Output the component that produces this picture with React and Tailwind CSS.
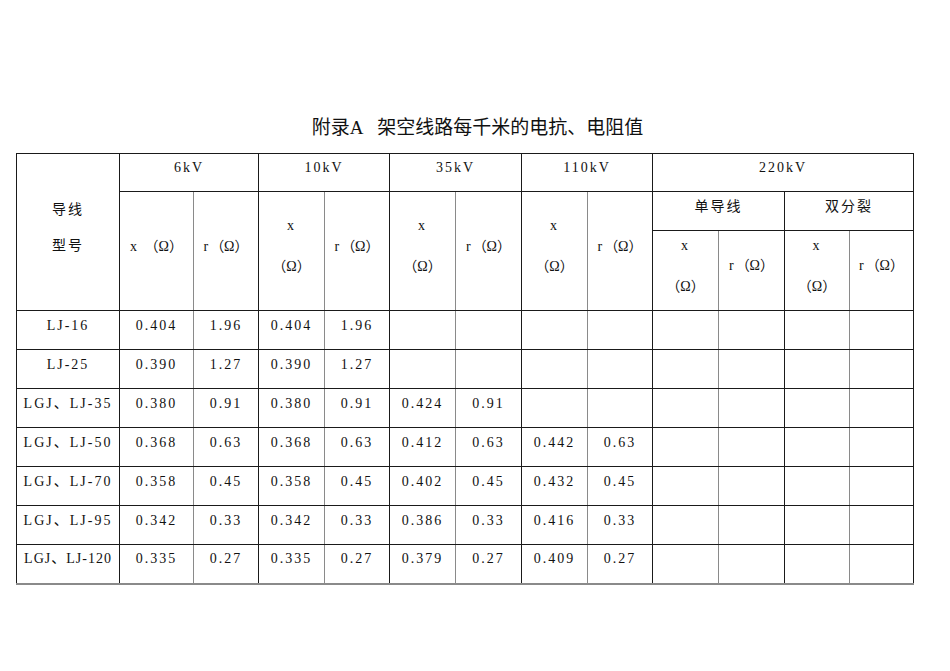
import React from "react";

const font = { fontFamily: '"Liberation Serif", "Noto Sans CJK SC", serif' };

const rows = [
  ["LJ-16", "0.404", "1.96", "0.404", "1.96", "", "", "", ""],
  ["LJ-25", "0.390", "1.27", "0.390", "1.27", "", "", "", ""],
  ["LGJ、LJ-35", "0.380", "0.91", "0.380", "0.91", "0.424", "0.91", "", ""],
  ["LGJ、LJ-50", "0.368", "0.63", "0.368", "0.63", "0.412", "0.63", "0.442", "0.63"],
  ["LGJ、LJ-70", "0.358", "0.45", "0.358", "0.45", "0.402", "0.45", "0.432", "0.45"],
  ["LGJ、LJ-95", "0.342", "0.33", "0.342", "0.33", "0.386", "0.33", "0.416", "0.33"],
  ["LGJ、LJ-120", "0.335", "0.27", "0.335", "0.27", "0.379", "0.27", "0.409", "0.27"],
];

const widths = [103, 74, 65, 66, 65, 66, 66, 66, 65, 66, 66, 65, 64];

// black cell / cell with grey right edge (x column of a pair)
const td = "border border-[#1a1a1a] text-center align-middle p-0 pb-[9px]";
const tdx = "border border-[#1a1a1a] border-r-[#8a8a8a] text-center align-middle p-0 pb-[9px]";
const last = "border-b-2 border-b-[#8a8a8a]";

const Omega = () => <span className="tracking-normal">（Ω）</span>;

// "x" over "(Ω)" with the wide line spacing of the original
const XOmega = () => (
  <div className="flex flex-col items-center gap-[25px]">
    <div>x</div>
    <Omega />
  </div>
);

const App = () => {
  return (
    <div
      className="w-[950px] h-[671px] bg-white text-black pt-[116px] text-[14px] leading-[16px] tracking-[2px]"
      style={font}
    >
      {/* title */}
      <div className="h-[24px] leading-[24px] text-[19px] tracking-normal text-center pl-[5px] text-[#111]">
        附录A<span className="inline-block w-[14px]"></span>架空线路每千米的电抗、电阻值
      </div>

      <div className="pl-[16px] mt-[13px]">
        <table className="table-fixed border-collapse w-[897px] text-[#111]">
          <colgroup>
            {widths.map((w, i) => (
              <col key={i} style={{ width: w }} />
            ))}
          </colgroup>
          <tbody>
            <tr className="h-[38px]">
              <td rowSpan={3} className={td}>
                <div className="flex flex-col items-center gap-[20px]">
                  <div>导线</div>
                  <div>型号</div>
                </div>
              </td>
              <td colSpan={2} className={td}>6kV</td>
              <td colSpan={2} className={td}>10kV</td>
              <td colSpan={2} className={td}>35kV</td>
              <td colSpan={2} className={td}>110kV</td>
              <td colSpan={4} className={td}>220kV</td>
            </tr>
            <tr className="h-[39px]">
              <td rowSpan={2} className={tdx}>
                x <Omega />
              </td>
              <td rowSpan={2} className={td}>
                r<Omega />
              </td>
              <td rowSpan={2} className={tdx}>
                <XOmega />
              </td>
              <td rowSpan={2} className={td}>
                r<Omega />
              </td>
              <td rowSpan={2} className={tdx}>
                <XOmega />
              </td>
              <td rowSpan={2} className={td}>
                r<Omega />
              </td>
              <td rowSpan={2} className={tdx}>
                <XOmega />
              </td>
              <td rowSpan={2} className={td}>
                r<Omega />
              </td>
              <td colSpan={2} className={td}>单导线</td>
              <td colSpan={2} className={td}>双分裂</td>
            </tr>
            <tr className="h-[80px]">
              <td className={tdx}>
                <XOmega />
              </td>
              <td className={td}>
                r<Omega />
              </td>
              <td className={tdx}>
                <XOmega />
              </td>
              <td className={td}>
                r<Omega />
              </td>
            </tr>

            {rows.map((r, ri) => {
              const isLast = ri === rows.length - 1;
              const cells = [...r, "", "", "", ""];
              return (
                <tr key={ri} className="h-[39px]">
                  {cells.map((c, ci) => {
                    let cls = ci > 0 && ci % 2 === 1 ? tdx : td;
                    if (isLast) cls = cls + " " + last;
                    if (ci === 0 && isLast) cls = cls + " tracking-[1px]";
                    return (
                      <td key={ci} className={cls}>
                        {c}
                      </td>
                    );
                  })}
                </tr>
              );
            })}
          </tbody>
        </table>
      </div>
    </div>
  );
};

export default App;
